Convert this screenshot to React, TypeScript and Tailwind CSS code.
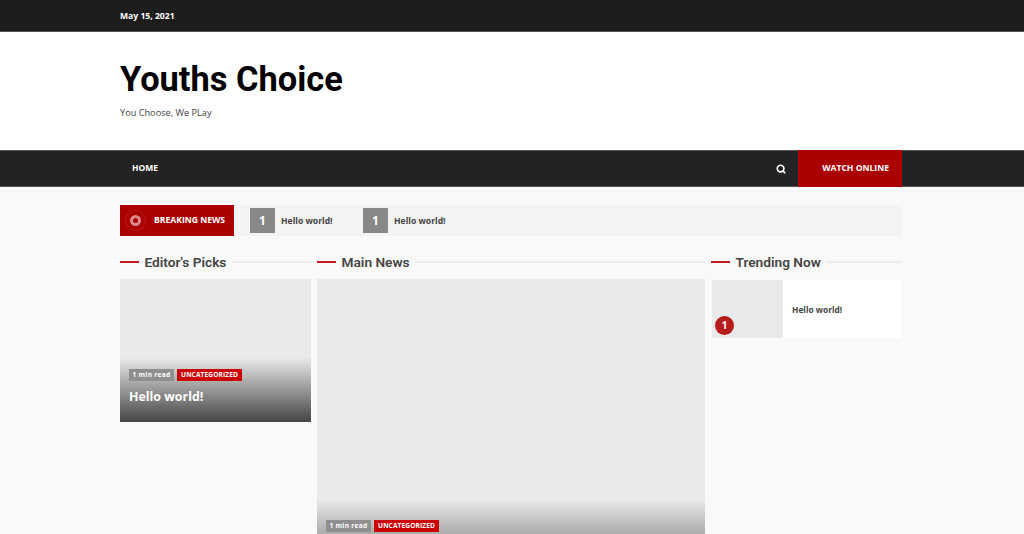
import { Search } from "lucide-react";

const openSans = "font-['Open_Sans',sans-serif]";
const roboto = "font-['Roboto',sans-serif]";

const SectionTitle = ({ title }: { title: string }) => (
    <div className="flex h-[16px] items-center">
        <span className="h-[2px] w-[19px] shrink-0 bg-[#c51d1d]" />
        <h2 className={`${roboto} px-[5.5px] text-[13.7px] leading-[16px] font-semibold whitespace-nowrap text-[#444444]`}>
            {title}
        </h2>
        <span className="h-[2px] grow bg-[#ececec]" />
    </div>
);

const Meta = () => (
    <div className={`${openSans} flex items-center gap-[3px] text-[6.6px] leading-[12px] font-bold text-white`}>
        <span className="bg-[#8f8f8f] px-[3.5px] tracking-[0.3px]">1 min read</span>
        <span className="bg-[#cc0000] px-[4px] tracking-[0.1px]">UNCATEGORIZED</span>
    </div>
);

const TickerItem = () => (
    <div className="flex items-center">
        <span className={`${openSans} flex h-[25px] w-[25px] items-center justify-center bg-[#888888] text-[12px] font-bold text-white`}>
            1
        </span>
        <span className={`${openSans} ml-[6px] w-[82px] pt-px text-[8.6px] font-bold text-[#444444]`}>Hello world!</span>
    </div>
);

export default function App() {
    return (
        <div className={`${openSans} h-[534px] overflow-hidden bg-[#f9f9f9]`}>
            <div className="h-[32px] border-b border-[#555555] bg-[#1d1d1d] pl-[120px]">
                <p className="text-[8.6px] leading-[32px] font-bold text-white">May 15, 2021</p>
            </div>

            <header className="h-[118px] bg-white pt-[27px] pl-[120px]">
                <h1 className={`${roboto} text-[34.4px] leading-[40px] font-bold text-black`}>Youths Choice</h1>
                <p className="mt-[7px] text-[9.2px] leading-[14px] text-[#444444]">You Choose, We PLay</p>
            </header>

            <nav className="flex h-[37px] items-center border-y border-[#555555] bg-[#232323] pl-[132px] pr-[122px]">
                <a className="text-[8.5px] font-bold text-white">HOME</a>
                <Search className="mr-[12px] ml-auto h-[10px] w-[10px] text-white" strokeWidth={4} />
                <a className="-my-px flex h-[37px] w-[104px] items-center justify-end bg-[#aa0000] pr-[13px] text-[8.6px] font-bold text-white">
                    WATCH ONLINE
                </a>
            </nav>

            <main className="mx-[120px] w-[782px] pt-[18px]">
                <div className="flex h-[31px] items-center bg-[#f3f3f3]">
                    <div className="flex h-full w-[114px] items-center bg-[#aa0000] pl-[5px]">
                        <span className="flex h-[21px] w-[21px] items-center justify-center rounded-full border border-[#b81a1a]">
                            <span className="h-[11px] w-[11px] rounded-full border-[3px] border-[#dc8a8a]" />
                        </span>
                        <span className="ml-[8px] text-[8.6px] font-bold text-white">BREAKING NEWS</span>
                    </div>
                    <div className="ml-[16px] flex">
                        <TickerItem />
                        <TickerItem />
                    </div>
                </div>

                <div className="mt-[18px] grid grid-cols-[191px_388px_191px] gap-x-[6px]">
                    <section>
                        <SectionTitle title="Editor's Picks" />
                        <article className="mt-[9px] flex h-[143px] flex-col justify-end bg-[linear-gradient(to_bottom,#eaeaea_55%,#444444_100%)] px-[9px] pb-[15px]">
                            <Meta />
                            <h3 className="mt-[6px] text-[12.4px] leading-[20px] font-bold text-white">Hello world!</h3>
                        </article>
                    </section>

                    <section>
                        <SectionTitle title="Main News" />
                        <article className="mt-[9px] h-[400px] bg-[linear-gradient(to_bottom,#eaeaea_55%,#444444_78%)] px-[9px] pt-[241px]">
                            <Meta />
                        </article>
                    </section>

                    <section>
                        <SectionTitle title="Trending Now" />
                        <article className="mt-[10px] ml-[1px] flex h-[57.5px] w-[189px] items-center bg-white">
                            <div className="relative h-full w-[71px] bg-[#eaeaea]">
                                <span className="absolute bottom-[3px] left-[3px] flex h-[19px] w-[19px] items-center justify-center rounded-full bg-[#b71c1c] text-[10px] font-bold text-white">
                                    1
                                </span>
                            </div>
                            <h3 className="ml-[9px] pt-[3px] text-[8.4px] font-bold text-[#444444]">Hello world!</h3>
                        </article>
                    </section>
                </div>
            </main>
        </div>
    );
}
